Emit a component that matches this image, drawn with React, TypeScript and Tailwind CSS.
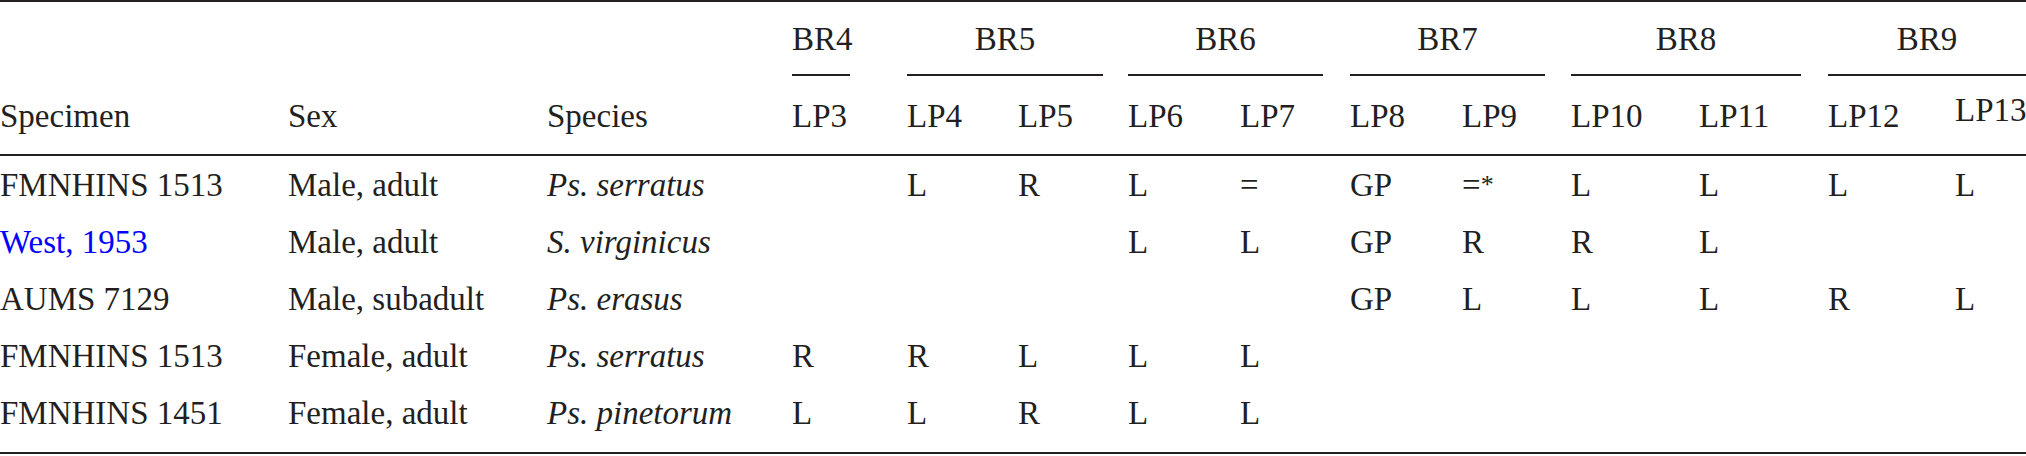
import clsx from "clsx";

type Row = {
  specimen: string;
  link?: boolean;
  sex: string;
  species: string;
  cells: string[];
};

const rows: Row[] = [
  {
    specimen: "FMNHINS 1513",
    sex: "Male, adult",
    species: "Ps. serratus",
    cells: ["", "L", "R", "L", "=", "GP", "=*", "L", "L", "L", "L"],
  },
  {
    specimen: "West, 1953",
    link: true,
    sex: "Male, adult",
    species: "S. virginicus",
    cells: ["", "", "", "L", "L", "GP", "R", "R", "L", "", ""],
  },
  {
    specimen: "AUMS 7129",
    sex: "Male, subadult",
    species: "Ps. erasus",
    cells: ["", "", "", "", "", "GP", "L", "L", "L", "R", "L"],
  },
  {
    specimen: "FMNHINS 1513",
    sex: "Female, adult",
    species: "Ps. serratus",
    cells: ["R", "R", "L", "L", "L", "", "", "", "", "", ""],
  },
  {
    specimen: "FMNHINS 1451",
    sex: "Female, adult",
    species: "Ps. pinetorum",
    cells: ["L", "L", "R", "L", "L", "", "", "", "", "", ""],
  },
];

const lps = ["LP3", "LP4", "LP5", "LP6", "LP7", "LP8", "LP9", "LP10", "LP11", "LP12", "LP13"];

const cols =
  "grid grid-cols-[288px_259px_245px_115px_111px_110px_112px_110px_112px_109px_128px_129px_127px_71px]";

const Cell = ({ value }: { value: string }) => {
  if (value === "=*") {
    return (
      <span>
        =<sup className="relative top-[-3px] text-[26px]">*</sup>
      </span>
    );
  }
  return <span>{value}</span>;
};

export default function App() {
  return (
    <div className="w-[2026px] bg-white font-serif text-[33px] leading-[40px] text-[#231f20]">
      <div className="border-y-2 border-[#231f20] pb-[11px] [font-family:Liberation_Serif,Times_New_Roman,serif]">
        {/* header, group row */}
        <div className={clsx(cols, "pt-[17px]")}>
          <div className="col-span-3" />
          <div className="w-[58px] border-b-2 border-[#231f20] pb-[15px] text-center">BR4</div>
          <div className="col-span-2 pr-[25px]">
            <div className="border-b-2 border-[#231f20] pb-[15px] text-center">BR5</div>
          </div>
          <div className="col-span-2 pr-[27px]">
            <div className="border-b-2 border-[#231f20] pb-[15px] text-center">BR6</div>
          </div>
          <div className="col-span-2 pr-[26px]">
            <div className="border-b-2 border-[#231f20] pb-[15px] text-center">BR7</div>
          </div>
          <div className="col-span-2 pr-[27px]">
            <div className="border-b-2 border-[#231f20] pb-[15px] text-center">BR8</div>
          </div>
          <div className="col-span-2">
            <div className="border-b-2 border-[#231f20] pb-[15px] text-center">BR9</div>
          </div>
        </div>

        {/* header, column row */}
        <div className={clsx(cols, "border-b-2 border-[#231f20] pt-[20px] pb-[18px]")}>
          <div>Specimen</div>
          <div>Sex</div>
          <div>Species</div>
          {lps.map((lp, i) => (
            <div key={lp} className={clsx(i === lps.length - 1 && "translate-y-[-6px]")}>
              {lp}
            </div>
          ))}
        </div>

        {/* body */}
        {rows.map((row, r) => (
          <div key={r} className={clsx(cols, "h-[57px] items-center")}>
            <div className={clsx(row.link && "text-[#0000ff]")}>{row.specimen}</div>
            <div>{row.sex}</div>
            <div className="italic">{row.species}</div>
            {row.cells.map((c, i) => (
              <div key={i}>
                <Cell value={c} />
              </div>
            ))}
          </div>
        ))}
      </div>
    </div>
  );
}
